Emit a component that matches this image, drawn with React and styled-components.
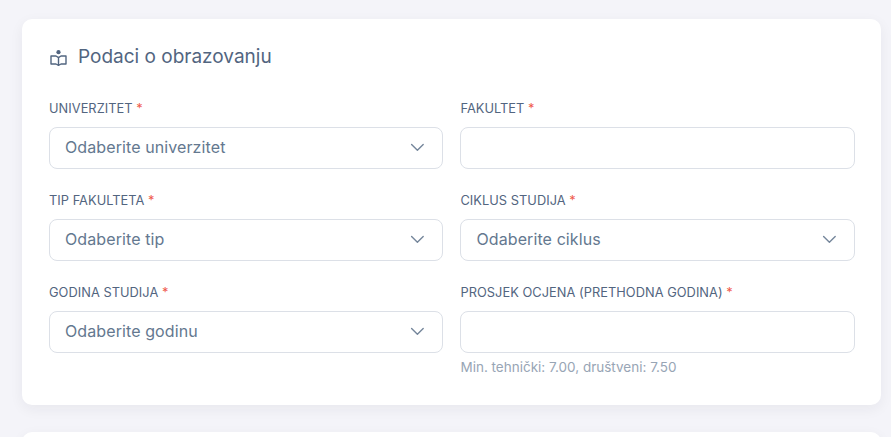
import React from "react";
import styled, { createGlobalStyle } from "styled-components";

const Global = createGlobalStyle`
  html, body { margin: 0; padding: 0; background: #f4f4f9; overflow: hidden; }
  * { box-sizing: border-box; }
`;
const Page = styled.div`
  width: 891px; height: 437px; padding: 19px 10px 0 22px;
  font-family: "Inter", "Liberation Sans", sans-serif; color: #526580;
  display: flex; flex-direction: column; gap: 27px; overflow: hidden;
`;
const Card = styled.section`
  background: #fff; border-radius: 10px; padding: 24px 26px 29px 27px;
  box-shadow: 0 4px 14px rgba(30, 41, 59, 0.06); flex: none;
`;
const Stub = styled(Card)`height: 40px; padding: 0;`;
const Title = styled.h2`
  margin: 0 0 27px; font-size: 19px; font-weight: 400; line-height: 28px; color: #526580;
  display: flex; align-items: center; gap: 11px;
`;
const TitleIcon = styled.svg`margin-left: 1px; margin-top: 2px; flex: none;`;
const Grid = styled.div`display: grid; grid-template-columns: 394.45px 394.55px; column-gap: 17px; row-gap: 21px;`;
const Field = styled.div`display: flex; flex-direction: column;`;
const Label = styled.label`font-size: 12.8px; line-height: 20px; letter-spacing: 0.05px; padding-top: 1px; margin-bottom: 8px; color: #526580;`;
const Req = styled.span`color: #ef5a4c;`;
const Control = styled.div`
  height: 42px; border: 1px solid #dce0e7; border-radius: 8px; background: #fff;
  display: flex; align-items: center; justify-content: space-between;
  padding: 0 16px 2px 15px; font-size: 16px; letter-spacing: 0.1px; color: #64788f;
`;
const Hint = styled.div`font-size: 13.5px; line-height: 18px; color: #98a5b5; margin-top: 5px;`;

const Chevron = () => (
  <svg width="16" height="16" viewBox="0 0 16 16" fill="none" stroke="#75869b" strokeWidth="1.4" strokeLinecap="round" strokeLinejoin="round">
    <path d="M1.6 5.5 7.4 11.2 13.2 5.5" />
  </svg>
);
const BookIcon = () => (
  <TitleIcon width="17" height="16" viewBox="0 0 17 16" fill="none" stroke="#526580" strokeWidth="1.4" strokeLinejoin="round">
    <circle cx="8.5" cy="2.2" r="2.1" fill="#526580" stroke="none" />
    <path d="M8.5 7.6 6 6H1v8h5l2.5 1.3L11 14h5V6h-5L8.5 7.6Zm0 0v7.7" />
  </TitleIcon>
);
const SelectField = ({ label, value }) => (
  <Field>
    <Label>{label} <Req>*</Req></Label>
    <Control>{value}<Chevron /></Control>
  </Field>
);
const TextField = ({ label, hint }) => (
  <Field>
    <Label>{label} <Req>*</Req></Label>
    <Control />
    {hint && <Hint>{hint}</Hint>}
  </Field>
);

export default function App() {
  return (
    <Page>
      <Global />
      <Card>
        <Title><BookIcon />Podaci o obrazovanju</Title>
        <Grid>
          <SelectField label="UNIVERZITET" value="Odaberite univerzitet" />
          <TextField label="FAKULTET" />
          <SelectField label="TIP FAKULTETA" value="Odaberite tip" />
          <SelectField label="CIKLUS STUDIJA" value="Odaberite ciklus" />
          <SelectField label="GODINA STUDIJA" value="Odaberite godinu" />
          <TextField label="PROSJEK OCJENA (PRETHODNA GODINA)" hint="Min. tehnički: 7.00, društveni: 7.50" />
        </Grid>
      </Card>
      <Stub />
    </Page>
  );
}
